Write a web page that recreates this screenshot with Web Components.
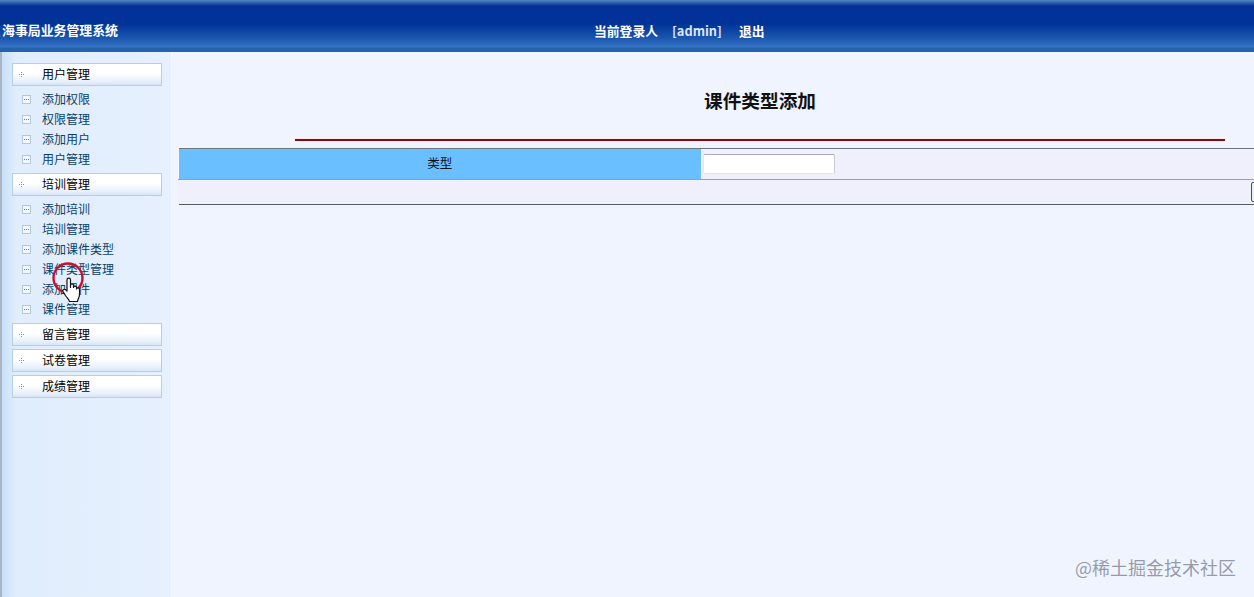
<!DOCTYPE html>
<html lang="zh">
<head>
<meta charset="utf-8">
<title>海事局业务管理系统</title>
<style>
  html, body { margin: 0; height: 100%; overflow: hidden; }
  body { font-family: "Noto Sans CJK SC", sans-serif; background: #f0f4ff; }
</style>
</head>
<body>
<app-shell>
  <top-bar slot="top" title-text="海事局业务管理系统" user="admin"></top-bar>
  <side-menu slot="side">
    <menu-group label="用户管理">
      <menu-item>添加权限</menu-item>
      <menu-item>权限管理</menu-item>
      <menu-item>添加用户</menu-item>
      <menu-item>用户管理</menu-item>
    </menu-group>
    <menu-group label="培训管理">
      <menu-item>添加培训</menu-item>
      <menu-item>培训管理</menu-item>
      <menu-item>添加课件类型</menu-item>
      <menu-item>课件类型管理</menu-item>
      <menu-item>添加课件</menu-item>
      <menu-item>课件管理</menu-item>
    </menu-group>
    <menu-group label="留言管理"></menu-group>
    <menu-group label="试卷管理"></menu-group>
    <menu-group label="成绩管理"></menu-group>
  </side-menu>
  <type-form heading="课件类型添加" label="类型"></type-form>
</app-shell>
<click-cursor></click-cursor>
<water-mark>@稀土掘金技术社区</water-mark>

<script>
class AppShell extends HTMLElement {
  constructor() {
    super();
    this.attachShadow({ mode: "open" }).innerHTML = `
<style>
  :host { display: flex; flex-direction: column; height: 597px; border-left: 2px solid #a9b4c4; box-sizing: border-box; }
  .body { display: flex; flex: 1; min-height: 0; }
</style>
<slot name="top"></slot>
<div class="body">
  <slot name="side"></slot>
  <slot></slot>
</div>`;
  }
}

class TopBar extends HTMLElement {
  constructor() {
    super();
    this.attachShadow({ mode: "open" }).innerHTML = `
<style>
  :host {
    display: flex; align-items: center; height: 52px; margin-left: -2px;
    padding-top: 9px; box-sizing: border-box; color: #fff; font-weight: 700;
    background: linear-gradient(#5a86c4 0, #2a5cab 3px, #033097 6px, #003399 24px, #1a56ae 38px, #3674c6 47px, #2562ac 48px, #2562ac 52px);
  }
  .name { width: 594px; padding: 0 0 2px 2px; box-sizing: border-box; font-size: 12.9px; white-space: nowrap; }
  .info { display: flex; font-size: 12.8px; white-space: nowrap; }
  .user { margin-left: 14px; width: 67px; color: #dbe6fb; }
</style>
<div class="name"></div>
<div class="info"><span>当前登录人</span><span class="user"></span><span>退出</span></div>`;
    this.shadowRoot.querySelector(".name").textContent = this.getAttribute("title-text");
    this.shadowRoot.querySelector(".user").textContent = "[" + this.getAttribute("user") + "]";
  }
}

class SideMenu extends HTMLElement {
  constructor() {
    super();
    this.attachShadow({ mode: "open" }).innerHTML = `
<style>
  :host {
    display: block; width: 170px; flex: none; box-sizing: border-box; padding: 11px 0 0 10px;
    border-right: 1px solid #f6faff;
    background: linear-gradient(90deg, #c9e0f8 0, #e0edfc 14px, #e6f0fe 100%);
  }
</style>
<slot></slot>`;
  }
}

class MenuGroup extends HTMLElement {
  constructor() {
    super();
    this.attachShadow({ mode: "open" }).innerHTML = `
<style>
  :host { display: block; width: 150px; margin-bottom: 3px; }
  .head {
    display: flex; align-items: center; height: 23px; box-sizing: border-box; padding-bottom: 2px;
    border: 1px solid #b5cfea; color: #000; font-size: 12px;
    background: linear-gradient(#fff 0, #fff 45%, #e6effb 85%, #d6e5f6 100%);
  }
  .dots { width: 5px; height: 5px; margin: 2px 18px 0 6px; flex: none; }
  .list { margin-top: 3px; margin-bottom: 4px; }
  .list.empty { display: none; }
</style>
<div class="head">
  <svg class="dots" viewBox="0 0 5 5"><path d="M2 0h1v1H2zM0 2h1v1H0zM2 2h1v1H2zM4 2h1v1H4zM2 4h1v1H2z" fill="#7d93ad"/></svg>
  <span class="label"></span>
</div>
<div class="list"><slot></slot></div>`;
    this.shadowRoot.querySelector(".label").textContent = this.getAttribute("label");
  }
  connectedCallback() {
    // 没有子项的分组不占位
    if (!this.querySelector("menu-item")) this.shadowRoot.querySelector(".list").classList.add("empty");
  }
}

class MenuItem extends HTMLElement {
  constructor() {
    super();
    this.attachShadow({ mode: "open" }).innerHTML = `
<style>
  :host { display: flex; align-items: center; height: 20px; box-sizing: border-box; padding: 0 0 2px 10px; color: #0a3f68; font-size: 12px; white-space: nowrap; }
  svg { width: 9px; height: 9px; margin: 2px 11px 0 0; flex: none; }
</style>
<svg viewBox="0 0 9 9"><rect x=".5" y=".5" width="8" height="8" fill="#f2f7fd" stroke="#b4c8dc"/><path d="M2 4h1v1H2zM4 4h1v1H4zM6 4h1v1H6z" fill="#6f8299"/></svg>
<slot></slot>`;
  }
}

class TypeForm extends HTMLElement {
  constructor() {
    super();
    this.attachShadow({ mode: "open" }).innerHTML = `
<style>
  :host { display: block; flex: 1; min-width: 0; overflow: hidden; padding-left: 6px; }
  h1 { margin: 0; height: 87px; box-sizing: border-box; padding: 36px 0 0 0; width: 1164px; text-align: center;
       font: 700 18.670px/24px "Noto Sans CJK SC", sans-serif; color: #111; letter-spacing: 0; }
  .rule { width: 930px; height: 2px; margin-left: 117px; background: #7a0f16; box-shadow: 0 0 0 1px #fde8ea; }
  table { width: 1100px; margin-top: 7px; border-collapse: collapse; border-top: 1px solid #6d7480; border-bottom: 1px solid #555c68; background: #f0f0fd; }
  td { padding: 0; box-sizing: border-box; }
  .r1 td { height: 31px; border-bottom: 1px solid #9a9eb0; }
  .r2 td { height: 25px; }
  .k { width: 522px; border-left: 1px solid #f6f9ff; background: #69bfff; color: #111; font-size: 12.500px; line-height: 12px; padding-bottom: 3px; text-align: center; }
  .v { padding-left: 2px; }
  input { display: block; width: 132px; height: 20px; box-sizing: border-box; margin: 0; padding: 0;
          border: 1px solid #e4e4ee; border-top-color: #a9a9bb; border-right-color: #c9c9d6; border-radius: 2px; background: #fff; outline: 0; }
  .btn { display: block; width: 40px; height: 20px; margin-left: 1072px; box-sizing: border-box; border: 1px solid #35566e; border-radius: 2px; background: #e6f2f4; }
</style>
<h1></h1>
<div class="rule"></div>
<table>
  <tr class="r1"><td class="k"></td><td class="v"><input type="text"></td></tr>
  <tr class="r2"><td colspan="2"><button class="btn" type="button"></button></td></tr>
</table>`;
    this.shadowRoot.querySelector("h1").textContent = this.getAttribute("heading");
    this.shadowRoot.querySelector(".k").textContent = this.getAttribute("label");
  }
}

// 录屏里的鼠标点击标记，盖在菜单上面
class ClickCursor extends HTMLElement {
  constructor() {
    super();
    this.attachShadow({ mode: "open" }).innerHTML = `
<style>
  :host { position: absolute; left: 50px; top: 262px; width: 36px; height: 42px; }
  svg { display: block; }
</style>
<svg width="36" height="42" viewBox="0 0 36 42">
  <circle cx="18" cy="16" r="14.500" fill="none" stroke="#c8102e" stroke-width="2.400"/>
  <path transform="translate(0 1.500)" d="M17 16.500c0-2.500 3.500-2.500 3.500 0v7.500l0-2c0-2 3-2 3 0v2c0-1.800 3-1.800 3 0v1.500c0-1.500 3-1.500 3 .5v5c0 3-1.500 4-2 7H19.500c-.5-2-2-3-4-6l-2.500-4c-1-2 1.500-3 3-1.500l1 1z"
        fill="#fff" stroke="#111" stroke-width="1.200" stroke-linejoin="round"/>
</svg>`;
  }
}

class WaterMark extends HTMLElement {
  constructor() {
    super();
    this.attachShadow({ mode: "open" }).innerHTML = `
<style>
  :host { position: absolute; right: 18px; top: 556px; color: rgba(110,115,130,.7); font: 18px/22px "Noto Sans CJK SC", sans-serif; white-space: nowrap; }
</style>
<slot></slot>`;
  }
}

customElements.define("app-shell", AppShell);
customElements.define("top-bar", TopBar);
customElements.define("side-menu", SideMenu);
customElements.define("menu-group", MenuGroup);
customElements.define("menu-item", MenuItem);
customElements.define("type-form", TypeForm);
customElements.define("click-cursor", ClickCursor);
customElements.define("water-mark", WaterMark);
</script>
</body>
</html>
